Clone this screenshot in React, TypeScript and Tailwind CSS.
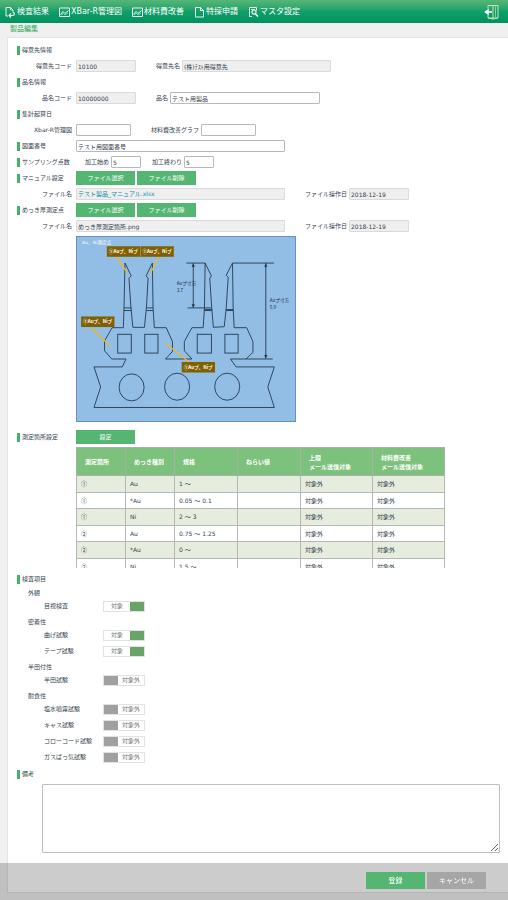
import { useState } from "react";
import type { ReactNode } from "react";
import clsx from "clsx";

const navItems = [
  { label: "検査結果", icon: "result" },
  { label: "XBar-R管理図", icon: "chart" },
  { label: "材料費改善", icon: "chart" },
  { label: "特採申請", icon: "doc" },
  { label: "マスタ設定", icon: "master" },
];

const rows = [
  ["①", "Au", "1 ～"],
  ["①", "*Au", "0.05 ～ 0.1"],
  ["①", "Ni", "2 ～ 3"],
  ["②", "Au", "0.75 ～ 1.25"],
  ["②", "*Au", "0 ～"],
  ["②", "Ni", "1.5 ～"],
];

const inspections = [
  { group: "外観", items: [{ name: "目視検査", on: true }] },
  {
    group: "密着性",
    items: [
      { name: "曲げ試験", on: true },
      { name: "テープ試験", on: true },
    ],
  },
  { group: "半田付性", items: [{ name: "半田試験", on: false }] },
  {
    group: "耐食性",
    items: [
      { name: "塩水噴霧試験", on: false },
      { name: "キャス試験", on: false },
      { name: "コローコード試験", on: false },
      { name: "ガスばっ気試験", on: false },
    ],
  },
];

function NavIcon({ name }: { name: string }) {
  return (
    <svg
      className="w-[11px] h-3 shrink-0"
      viewBox="0 0 22 24"
      fill="none"
      stroke="white"
      strokeWidth="1.8"
    >
      {name === "result" && (
        <>
          <path d="M6 20H2V3h9l5 5v3" />
          <path d="M11 3v5h5" strokeWidth="1.4" />
          <path d="M15 12c5 1 5 7 0 7H8M12 15l-4 4 4 4" strokeWidth="2.2" />
        </>
      )}
      {name === "chart" && (
        <>
          <path d="M1 4h20v17H1z" />
          <path d="M3 17l5-6 4 4 7-6" strokeWidth="2" />
          <path d="M4 18l5-3 3 3 6-4" strokeWidth="1" />
        </>
      )}
      {name === "doc" && (
        <>
          <path d="M3 3h10l6 6v13H3z" />
          <path d="M13 3v6h6" />
        </>
      )}
      {name === "master" && (
        <>
          <path d="M8 21H3V3h14v6" />
          <path d="M6 7h8" strokeWidth="1.4" />
          <circle cx="12" cy="12" r="4" strokeWidth="2.2" />
          <path d="M14 15l6 6" strokeWidth="3.2" />
        </>
      )}
    </svg>
  );
}

function Header() {
  return (
    <header className="flex items-center h-[23px] pl-[5px] pr-[9px] bg-linear-to-b from-[#55b777] via-[#0f9f68] to-[#009160]">
      <nav className="flex flex-1 items-center gap-[10px]">
        {navItems.map((item) => (
          <a
            key={item.label}
            href="#"
            className="flex items-center gap-px text-[8px] leading-3 text-white whitespace-nowrap"
          >
            <NavIcon name={item.icon} />
            {item.label}
          </a>
        ))}
      </nav>
      <button type="button" aria-label="ログアウト">
        <svg className="w-[15px] h-4" viewBox="0 0 30 32" fill="none">
          <path
            d="M8 9V3h20v25H8v-6M18 3v27M8 28l10 2 10-2"
            stroke="#c5e6b4"
            strokeWidth="2"
          />
          <path d="M23 5v21" stroke="#c5e6b4" strokeWidth="1.4" />
          <path d="M16 16H4M8 12l-5 4 5 4z" stroke="white" strokeWidth="3" />
        </svg>
      </button>
    </header>
  );
}

function SectionRow({
  title,
  children,
}: {
  title: string;
  children?: ReactNode;
}) {
  return (
    <div className="flex items-center h-4">
      <h2 className="flex items-center gap-0.5 w-[59px] shrink-0 whitespace-nowrap">
        <span className="w-[3px] h-[9px] bg-[#45b26b]" />
        {title}
      </h2>
      {children}
    </div>
  );
}

function Field({
  id,
  label,
  value = "",
  readOnly,
  labelClass,
  className,
}: {
  id: string;
  label: string;
  value?: string;
  readOnly?: boolean;
  labelClass?: string;
  className?: string;
}) {
  return (
    <>
      <label
        htmlFor={id}
        className={clsx("shrink-0 text-right whitespace-nowrap", labelClass)}
      >
        {label}
      </label>
      <input
        id={id}
        type="text"
        defaultValue={value}
        readOnly={readOnly}
        className={clsx(
          "h-3 px-px border rounded-[1px] min-w-0",
          readOnly
            ? "bg-[#efefef] border-[#dadada]"
            : "bg-white border-[#b9b9b9]",
          className
        )}
      />
    </>
  );
}

function GreenButton({ children }: { children: ReactNode }) {
  return (
    <button
      type="button"
      className="w-[59px] h-[14px] bg-[#54b672] text-white text-[6px] leading-[14px]"
    >
      {children}
    </button>
  );
}

function Callout({ x, y }: { x: number; y: number }) {
  return (
    <g>
      <rect x={x} y={y} width="101" height="32" fill="#7f6000" />
      <text
        x={x + 50}
        y={y + 21}
        textAnchor="middle"
        fontSize="14"
        fontWeight="bold"
        fill="white"
        className="font-['Noto_Sans_CJK_JP',sans-serif]"
      >
        ①Auプ、Niプ
      </text>
    </g>
  );
}

// めっき厚測定箇所の図
function PlatingDiagram() {
  return (
    <svg
      className="block w-[220px] h-[186px] ml-[59px] bg-[#92bde4] border border-[#6791bd]"
      viewBox="18 18 660 558"
      fill="none"
      role="img"
      aria-label="めっき厚測定箇所"
    >
      <g stroke="#1e3448" strokeWidth="2.6">
        <path d="M286 388L307 365V335L288 293H252L248 232L246 97L227 136L233 143L228 232L222 292H187L181 232L175 143L182 136L163 97L160 232L158 293H124L101 333V363L123 388H166L155 412H69L89 473L69 535H616L596 473L616 412H500L483 388H611" />
        <path d="M286 388H366L343 363V335L366 293H400L404 232L406 97L425 136L420 143L426 232L431 292L464 290L470 232L476 140L470 134L489 97L491 232L494 293H532L551 335V368L530 388" />
        <path d="M160 233H182M160 241H183M228 233H249M228 241H249M404 241H426M470 241H491" />
        <path d="M470 238H491M404 238H426" />
        <rect x="141" y="313" width="41" height="57" />
        <rect x="223" y="313" width="40" height="57" />
        <rect x="382" y="313" width="43" height="57" />
        <rect x="466" y="313" width="40" height="57" />
        <ellipse cx="183" cy="474" rx="38" ry="41" />
        <ellipse cx="321" cy="472" rx="38" ry="41" />
        <ellipse cx="473" cy="472" rx="38" ry="41" />
        <path d="M349 97H406M353 233H426M370 97V233M489 97H615M590 97V387" />
      </g>
      <path
        d="M370 98l-5 10h10zM370 232l-5-10h10zM590 98l-5 10h10zM590 386l-5-10h10z"
        fill="#1e3448"
      />
      <Callout x={108} y={46} />
      <Callout x={210} y={46} />
      <Callout x={30} y={259} />
      <Callout x={335} y={397} />
      <path d="M210 46v31" stroke="#a08a50" strokeWidth="2" />
      <path
        d="M138 80L170 127M265 80L240 128M60 293L117 348M288 342L357 397"
        stroke="#f2b91d"
        strokeWidth="4"
      />
      <g fontSize="14">
        <text x="33" y="40" fill="white">
          Au、Ni測定点
        </text>
        <g fill="#1b2a3a" className="font-['Noto_Sans_CJK_JP',sans-serif]">
          <text x="320" y="164">Auプ寸方</text>
          <text x="320" y="185">3.7</text>
          <text x="602" y="215">Auプ寸方</text>
          <text x="602" y="236">5.9</text>
        </g>
      </g>
    </svg>
  );
}

function MeasureTable() {
  const th = "border border-[#a9b0a9] pl-2 text-left font-bold leading-[9px]";
  const td = "border border-[#b4b8b4] pl-1";
  return (
    <div className="ml-[59px] mt-0.5 h-[121px] overflow-hidden">
      <table className="table-fixed w-[369px] border-collapse">
        <thead>
          <tr className="h-7 bg-[#7cc17c] text-white">
            <th className={clsx(th, "w-[49px]")}>測定箇所</th>
            <th className={clsx(th, "w-[49px]")}>めっき種別</th>
            <th className={clsx(th, "w-[63px]")}>規格</th>
            <th className={clsx(th, "w-[63px]")}>ねらい値</th>
            <th className={th}>
              上限
              <br />
              メール送信対象
            </th>
            <th className={th}>
              材料費改善
              <br />
              メール送信対象
            </th>
          </tr>
        </thead>
        <tbody>
          {rows.map(([place, kind, spec], i) => (
            <tr key={i} className="odd:h-[17px] even:h-4 odd:bg-[#e6ecde]">
              <td className={clsx(td, "font-['Noto_Sans_CJK_JP',sans-serif]")}>
                {place}
              </td>
              <td className={td}>{kind}</td>
              <td className={td}>{spec}</td>
              <td className={td}></td>
              <td className={td}>対象外</td>
              <td className={td}>対象外</td>
            </tr>
          ))}
        </tbody>
      </table>
    </div>
  );
}

function Toggle({ name, initial }: { name: string; initial: boolean }) {
  const [on, setOn] = useState(initial);
  return (
    <div className="flex items-center h-[14px] pl-[27px]">
      <label htmlFor={name} className="w-[59px] whitespace-nowrap">
        {name}
      </label>
      <div
        className={clsx(
          "flex items-center w-[42px] h-[11px] border border-[#e2e2e2]",
          on ? "flex-row" : "flex-row-reverse"
        )}
      >
        <span className="flex-1 text-center text-[#707878]">
          {on ? "対象" : "対象外"}
        </span>
        <input
          id={name}
          type="checkbox"
          checked={on}
          onChange={() => setOn(!on)}
          className="appearance-none w-[14px] h-full bg-[#a0a0a0] checked:bg-[#68a368]"
        />
      </div>
    </div>
  );
}

export default function App() {
  return (
    <div className="min-h-screen bg-[#f0f0f0] pb-2 font-['DejaVu_Sans','Noto_Sans_CJK_JP',sans-serif] text-[6px] leading-[8px] text-[#33434d]">
      <Header />
      <h1 className="h-[14px] pl-[10px] text-[7px] leading-[13px] font-medium text-[#45b26b]">
        製品編集
      </h1>
      <main className="ml-[7px] pt-1 pl-[9px] pr-2 pb-[39px] bg-white border border-r-0 border-[#e4e4e4]">
        <SectionRow title="得意先情報" />
        <div className="flex items-center h-4">
          <Field id="customer-code" label="得意先コード" value="10100" readOnly labelClass="w-[59px] pr-1" className="w-[60px]" />
          <Field id="customer-name" label="得意先名" value="(株)ﾃｽﾄ用得意先" readOnly labelClass="ml-5 pr-0.5" className="w-[149px]" />
        </div>
        <SectionRow title="品名情報" />
        <div className="flex items-center h-4">
          <Field id="product-code" label="品名コード" value="10000000" readOnly labelClass="w-[59px] pr-1" className="w-[60px]" />
          <Field id="product-name" label="品名" value="テスト用製品" labelClass="ml-5 pr-0.5" className="w-[150px]" />
        </div>
        <SectionRow title="集計起算日" />
        <div className="flex items-center h-4">
          <Field id="xbar-date" label="Xbar-R管理図" labelClass="w-[59px] pr-1" className="w-[55px]" />
          <Field id="cost-date" label="材料費改善グラフ" labelClass="ml-5 pr-0.5" className="w-[55px]" />
        </div>
        <SectionRow title="図面番号">
          <input
            type="text"
            aria-label="図面番号"
            defaultValue="テスト用図面番号"
            className="w-[209px] h-3 px-px bg-white border border-[#b9b9b9] rounded-[1px]"
          />
        </SectionRow>
        <SectionRow title="サンプリング点数">
          <Field id="sampling-start" label="加工始め" value="5" labelClass="ml-[9px] pr-0.5" className="w-[30px]" />
          <Field id="sampling-end" label="加工終わり" value="5" labelClass="ml-[11px] pr-0.5" className="w-[30px]" />
        </SectionRow>
        <SectionRow title="マニュアル設定">
          <div className="flex gap-0.5">
            <GreenButton>ファイル選択</GreenButton>
            <GreenButton>ファイル削除</GreenButton>
          </div>
        </SectionRow>
        <div className="flex items-center h-4">
          <span className="w-[59px] pr-1 text-right">ファイル名</span>
          <div className="flex items-center w-[209px] h-3 px-px bg-[#efefef] border border-[#dadada] rounded-[1px]">
            <a href="#" className="text-[#0c8ca8]">
              テスト製品_マニュアル.xlsx
            </a>
          </div>
          <Field id="manual-date" label="ファイル操作日" value="2018-12-19" readOnly labelClass="ml-5 pr-0.5" className="w-[60px]" />
        </div>
        <SectionRow title="めっき厚測定点">
          <div className="flex gap-0.5">
            <GreenButton>ファイル選択</GreenButton>
            <GreenButton>ファイル削除</GreenButton>
          </div>
        </SectionRow>
        <div className="flex items-center h-4 mb-0.5">
          <Field id="plating-file" label="ファイル名" value="めっき厚測定箇所.png" readOnly labelClass="w-[59px] pr-1" className="w-[209px]" />
          <Field id="plating-date" label="ファイル操作日" value="2018-12-19" readOnly labelClass="ml-5 pr-0.5" className="w-[60px]" />
        </div>
        <PlatingDiagram />

        <div className="mt-[7px]">
          <SectionRow title="測定箇所設定">
            <GreenButton>設定</GreenButton>
          </SectionRow>
          <MeasureTable />
        </div>

        <div className="mt-[3px]">
          <SectionRow title="検査項目" />
          <div className="flex flex-col gap-[3px]">
            {inspections.map(({ group, items }) => (
              <section key={group}>
                <h3 className="pl-[11px] h-3 leading-3">{group}</h3>
                <div className="flex flex-col gap-0.5">
                  {items.map((item) => (
                    <Toggle key={item.name} name={item.name} initial={item.on} />
                  ))}
                </div>
              </section>
            ))}
          </div>
        </div>

        <div className="mt-0.5">
          <SectionRow title="備考" />
          <div className="pl-[25px] mt-0.5">
            <textarea
              aria-label="備考"
              className="block w-full h-[69px] bg-white border border-[#bdbdbd] rounded-[1px]"
            />
          </div>
        </div>
      </main>
      <footer className="fixed inset-x-0 bottom-0 flex items-start justify-end gap-0.5 h-[37px] pt-[9px] pr-[22px] bg-black/20 text-[7px] text-white">
        <button type="button" className="w-[59px] h-[17px] bg-[#54b672]">
          登録
        </button>
        <button type="button" className="w-[59px] h-[17px] bg-[#a6a6a6]">
          キャンセル
        </button>
      </footer>
    </div>
  );
}
